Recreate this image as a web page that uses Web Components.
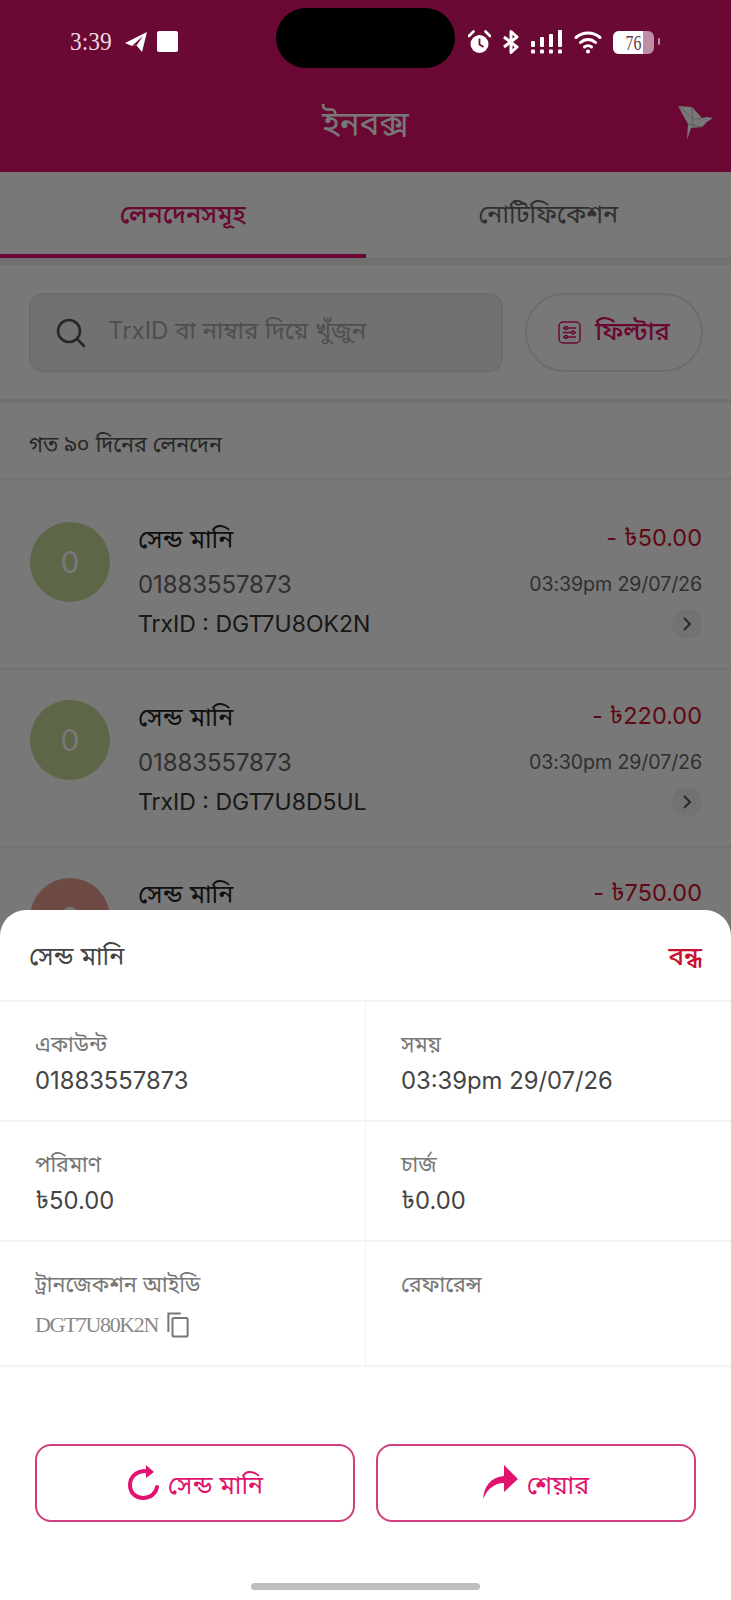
<!DOCTYPE html>
<html lang="bn"><head><meta charset="utf-8"><title>ইনবক্স</title>
<style>
html,body{margin:0;padding:0;background:#fff}
body{font-family:Inter,"Noto Sans Bengali","Lohit Bengali","Noto Sans",sans-serif}
</style></head><body>
<app-shell>
  <status-bar></status-bar>
  <inbox-title>ইনবক্স</inbox-title>
  <tab-bar></tab-bar>
  <search-row></search-row>
  <section-label>গত ৯০ দিনের লেনদেন</section-label>
  <txn-row first amount="- ৳50.00" number="01883557873" time="03:39pm 29/07/26" trx="TrxID : DGT7U8OK2N" tone="#c8d99a"></txn-row>
  <txn-row amount="- ৳220.00" number="01883557873" time="03:30pm 29/07/26" trx="TrxID : DGT7U8D5UL" tone="#c8d99a"></txn-row>
  <txn-row amount="- ৳750.00" tone="#e8a090"></txn-row>
  <detail-sheet></detail-sheet>
</app-shell>
<script>
function el(name, html){
  customElements.define(name, class extends HTMLElement{
    constructor(){super();this.attachShadow({mode:'open'}).innerHTML = typeof html==='function'?html(this):html;}
  });
}
el('app-shell',`<style>
:host{display:block;position:relative;width:731px;height:1600px;overflow:hidden;background:#fff}
.dim{position:absolute;inset:0;background:rgba(0,0,0,.53);z-index:2}
::slotted(status-bar){position:relative;z-index:3}
::slotted(detail-sheet){position:absolute;left:0;right:0;bottom:0;z-index:4}
</style><slot></slot><div class="dim"></div>`);

el('status-bar',`<style>
:host{display:flex;align-items:flex-start;height:84px;background:#6a0934;color:#fff;box-sizing:border-box}
.left{display:flex;align-items:center;gap:12px;margin:31px 0 0 70px;width:206px;height:21px}
.time{font:26px/21px "Liberation Serif",serif;color:#ecdbe1;width:44px;transform:scaleX(.9);transform-origin:left}
.sq{width:21px;height:21px;background:#fff;border-radius:2px;margin-left:-3px}
.pill{width:179px;height:60px;margin-top:8px;background:#000;border-radius:30px;flex:none}
.right{display:flex;align-items:center;margin:29px 0 0 13px;height:25px;position:relative}
svg{display:block;flex:none}
.batt{position:relative;width:41px;height:23px;border-radius:6px;background:#bd8ea4;overflow:hidden;margin-left:11px;margin-top:1px}
.fill{position:absolute;left:0;top:0;bottom:0;width:30px;background:#fff}
.num{position:absolute;inset:0;text-align:center;font:22px/23px "Liberation Serif",serif;color:#5e3a4a;transform:scaleX(.72)}
.tip{width:2px;height:7px;background:#b98ba0;margin-left:4px;border-radius:1px}
</style>
<div class="left"><span class="time">3:39</span>
<svg width="24" height="20" viewBox="0 0 24 20" style="margin-left:-2px"><path d="M1 11 23 0 18 20 12.5 13.5 8 14Z" fill="#fff"/><path d="M8 14 19 4 12.5 13.5Z" fill="#6a0934"/></svg>
<div class="sq"></div></div>
<div class="pill"></div>
<div class="right">
<svg width="23" height="24" viewBox="0 0 23 24"><circle cx="11.5" cy="14" r="9" fill="#fff"/><path d="M11.5 8.5V14.5L15.5 17" fill="none" stroke="#6a0934" stroke-width="1.8"/><path d="M1 6 5.5 1.5M22 6 17.500 1.500" stroke="#fff" stroke-width="2.600" stroke-linecap="round"/></svg>
<svg style="margin-left:11px" width="18" height="24" viewBox="0 0 18 24"><path d="M2 7 15 17 9 22.500V1.500L15 7 2 17" fill="none" stroke="#fff" stroke-width="3" stroke-linejoin="round"/></svg>
<svg style="margin-left:11px" width="31" height="24" viewBox="0 0 31 24" fill="#fff"><rect x="0" y="11" width="4" height="6" rx="1"/><rect x="0" y="19.500" width="4" height="4" rx="1"/><rect x="9" y="7" width="4" height="10" rx="1"/><rect x="9" y="19.500" width="4" height="4" rx="1"/><rect x="18" y="4" width="4" height="13" rx="1"/><rect x="18" y="19.500" width="4" height="4" rx="1"/><rect x="27" y="0" width="4" height="17" rx="1"/><rect x="27" y="19.500" width="4" height="4" rx="1"/></svg>
<svg style="margin-left:12px" width="28" height="24" viewBox="0 0 28 24" fill="none" stroke="#fff" stroke-width="3" stroke-linecap="round"><path d="M2 7.500C9 1.500 19 1.500 26 7.500"/><path d="M6.500 12.500C11 8.500 17 8.500 21.500 12.500"/><path d="M10.500 17C12.500 15.300 15.500 15.300 17.500 17"/><circle cx="14" cy="21.500" r="1.300" fill="#fff" stroke-width="1.500"/></svg>
<div class="batt"><div class="fill"></div><div class="num">76</div></div><div class="tip"></div>
</div>`);

el('inbox-title',`<style>
:host{display:flex;align-items:center;justify-content:center;position:relative;height:88px;background:#e2136e;color:#fff;font-size:33px;box-sizing:border-box;padding-bottom:6px}
svg{position:absolute;right:17px;top:20px}
</style><slot></slot>
<svg width="36" height="36" viewBox="0 0 36 36"><path d="M0 2 14 3 24 14 29 13 35 14 29 18 24 23 13 24 9 36 10 20Z" fill="#fff"/><path d="M14 3 15 24M10 20 24 23M0 2 16 15 24 14" stroke="#bbb" stroke-width=".8" fill="none"/></svg>`);

el('tab-bar',`<style>
:host{display:block;background:#fff}
.tabs{display:flex;height:86px;box-sizing:border-box}
.t{flex:1;display:flex;align-items:center;justify-content:center;font-size:25px;color:#666;padding-top:6px;border-bottom:4px solid transparent;box-sizing:border-box}
.on{color:#e2136e;border-bottom-color:#e2136e;font-weight:500}
.band{height:8px;background:#f1f1f1;margin-top:-1px}
</style><div class="tabs"><div class="t on">লেনদেনসমূহ</div><div class="t">নোটিফিকেশন</div></div><div class="band"></div>`);

el('search-row',`<style>
:host{display:flex;gap:22px;padding:28px 29px 28px 29px;border-bottom:4px solid #f1f1f1;box-sizing:border-box;height:138px}
.box{flex:none;width:474px;height:79px;box-sizing:border-box;background:#f0f0f0;border:2px solid #e6e6e6;border-radius:14px;display:flex;align-items:center;padding-left:25px;font-size:24px;color:#a8a8a8;gap:22px}
.f{flex:none;width:178px;height:79px;box-sizing:border-box;border:2px solid #e6e6e6;border-radius:40px;display:flex;align-items:center;justify-content:center;gap:14px;color:#e2136e;font-size:25.500px;font-weight:500}
svg{display:block;flex:none}
</style><div class="box"><svg width="30" height="30" viewBox="0 0 30 30" fill="none" stroke="#555" stroke-width="2.600"><circle cx="13" cy="13" r="11"/><path d="M21 21 28 28" stroke-linecap="round"/></svg><span>TrxID বা নাম্বার দিয়ে খুঁজুন</span></div>
<div class="f"><svg width="23" height="23" viewBox="0 0 23 23" fill="none" stroke="#e2136e" stroke-width="1.500"><rect x="1" y="1" width="21" height="21" rx="4"/><path d="M5 7H18M5 11.500H18M5 16H18"/><circle cx="8" cy="7" r="1.500" fill="#fff"/><circle cx="15" cy="11.500" r="1.500" fill="#fff"/><circle cx="8" cy="16" r="1.500" fill="#fff"/></svg><span>ফিল্টার</span></div>`);

el('section-label',`<style>
:host{display:flex;align-items:center;height:77px;padding:10px 29px 0;font-size:21.5px;color:#555;border-bottom:2px solid #f1f1f1;box-sizing:border-box}
</style><slot></slot>`);

el('txn-row',h=>{const a=n=>h.getAttribute(n)||'';const full=h.hasAttribute('trx');return `<style>
:host{display:flex;height:177.5px;box-sizing:border-box;padding:30px 29px 0 30px;border-bottom:2px solid #f1f1f1;background:#fff}
:host([first]){height:190px;padding-top:42px}
.av{flex:none;width:80px;height:80px;border-radius:50%;background:${a('tone')};display:flex;align-items:center;justify-content:center;color:#fff;font-size:30px}
.c{margin-left:28px;flex:1;display:flex;flex-direction:column}
.r{display:flex;justify-content:space-between;align-items:center}
.r1{height:44px;margin-top:-5px;font-size:25px;color:#222}
.r1 .ti{padding-top:3px}
.r2{height:46px;color:#666;font-size:24px;letter-spacing:-.1px}
.r3{height:34px;color:#333;font-size:23px}
.amt{color:#d0112b;font-size:23.5px}
.tm{font-size:19.6px}
.chev{width:30px;height:30px;border-radius:50%;background:#f2f2f2;display:flex;align-items:center;justify-content:center}
svg{display:block}
</style><div class="av">0</div><div class="c">
<div class="r r1"><span class="ti">সেন্ড মানি</span><span class="amt">${a('amount')}</span></div>
${full?`<div class="r r2"><span>${a('number')}</span><span class="tm">${a('time')}</span></div>
<div class="r r3"><span>${a('trx')}</span><span class="chev"><svg width="10" height="16" viewBox="0 0 10 16" fill="none" stroke="#555" stroke-width="2"><path d="M2 2 8 8 2 14"/></svg></span></div>`:''}
</div>`});

el('detail-cell',`<style>
:host{display:block;box-sizing:border-box;padding:27px 0 0 35px;border-bottom:2px solid #f3f3f3;min-width:0}
:host([right]){padding-left:35px;border-left:1px solid #f3f3f3}
.l{font-size:21.5px;color:#777;line-height:31px}
.v{font-size:23.8px;color:#444;line-height:42px;display:flex;align-items:center}
</style><div class="l"><slot name="label"></slot></div><div class="v"><slot></slot></div>`);

el('action-btn',`<style>
:host{display:flex;flex:none;width:320px;height:78px;box-sizing:border-box;border:2px solid #cf3f7f;border-radius:16px;padding-top:8px;align-items:center;justify-content:center;gap:9px;color:#e2136e;font-size:25px}
::slotted(svg){margin-top:-10px}
</style><slot name="icon"></slot><slot></slot>`);

el('detail-sheet',`<style>
:host{display:block;height:690px;background:#fff;border-radius:26px 26px 0 0}
.head{display:flex;justify-content:space-between;align-items:center;height:92px;box-sizing:border-box;padding:6px 29px 0;border-bottom:2px solid #f3f3f3;font-size:25px;color:#444}
.close{color:#c8102e;font-size:26px;font-weight:500}
.grid{display:grid;grid-template-columns:365px 366px}
detail-cell{height:120px}
detail-cell.h3{height:125px}
.idrow{display:flex;align-items:center;margin-top:4px}
.id{font:22px/42px "Liberation Serif",serif;color:#888;letter-spacing:-1.4px}
.acts{display:flex;justify-content:space-between;padding:77px 35px 0 35px}
.home{position:absolute;left:251px;bottom:10px;width:229px;height:7px;background:#bfbfbf;border-radius:4px}
svg{display:block;flex:none}
</style>
<div class="head"><span>সেন্ড মানি</span><span class="close">বন্ধ</span></div>
<div class="grid">
<detail-cell><span slot="label">একাউন্ট</span>01883557873</detail-cell>
<detail-cell right><span slot="label">সময়</span>03:39pm 29/07/26</detail-cell>
<detail-cell><span slot="label">পরিমাণ</span>৳50.00</detail-cell>
<detail-cell right><span slot="label">চার্জ</span>৳0.00</detail-cell>
<detail-cell class="h3"><span slot="label">ট্রানজেকশন আইডি</span><div class="idrow"><span class="id">DGT7U80K2N</span><svg style="margin-left:9px" width="22" height="26" viewBox="0 0 24 26" preserveAspectRatio="none" fill="none" stroke="#777" stroke-width="2.200"><path d="M1.500 20V1.500H15"/><rect x="6" y="6" width="16.500" height="18.500" rx="1.500"/></svg></div></detail-cell>
<detail-cell class="h3" right><span slot="label">রেফারেন্স</span></detail-cell>
</div>
<div class="acts">
<action-btn><svg slot="icon" width="32" height="35" viewBox="0 0 32 35"><path d="M19 6C8 6 3 13 3 20C3 28 9 33 16 33C24 33 29 28 30 22" fill="none" stroke="#e2136e" stroke-width="4" stroke-linecap="round"/><path d="M19 0 27 7 19 13Z" fill="#e2136e"/></svg>সেন্ড মানি</action-btn>
<action-btn><svg slot="icon" width="35" height="34" viewBox="0 0 35 34"><path d="M0 34C1 21 8 12 21 11V0L35 14 21 27V18C12 18 5 23 0 34Z" fill="#e2136e"/></svg>শেয়ার</action-btn>
</div>
<div class="home"></div>`);
</script>
</body></html>
